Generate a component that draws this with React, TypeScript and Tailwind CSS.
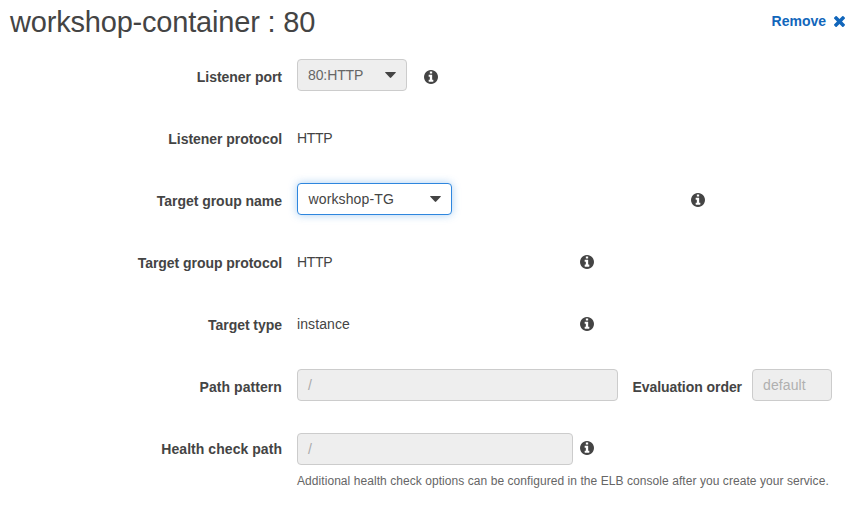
import type { ReactNode } from "react";

function InfoIcon({ className = "" }: { className?: string }) {
  return (
    <svg viewBox="128 128 1536 1536" className={`h-[14px] w-[14px] shrink-0 fill-[#444] ${className}`}>
      <path d="M1152 1376v-160q0-14-9-23t-23-9h-96v-512q0-14-9-23t-23-9h-320q-14 0-23 9t-9 23v160q0 14 9 23t23 9h96v320h-96q-14 0-23 9t-9 23v160q0 14 9 23t23 9h448q14 0 23-9t9-23zm-128-896v-160q0-14-9-23t-23-9h-192q-14 0-23 9t-9 23v160q0 14 9 23t23 9h192q14 0 23-9t9-23zm640 416q0 209-103 385.5t-279.5 279.5-385.5 103-385.5-103-279.5-279.5-103-385.5 103-385.5 279.5-279.5 385.5-103 385.5 103 279.5 279.5 103 385.5z" />
    </svg>
  );
}

function Caret() {
  return (
    <svg viewBox="0 0 11 6" className="mt-[7px] h-[6px] w-[11px] fill-[#444]">
      <path d="M0.6 0h9.8q.8 0 .3.7L6.2 5.6q-.7.7-1.4 0L.3.7Q-.2 0 .6 0z" />
    </svg>
  );
}

function Row({ label, spacing = "", children }: { label: string; spacing?: string; children: ReactNode }) {
  return (
    <div className="flex h-[62px] items-start">
      <div className={`w-[282px] shrink-0 pt-2 text-right font-bold whitespace-nowrap ${spacing}`}>{label}</div>
      <div className="ml-[15px] flex items-start">{children}</div>
    </div>
  );
}

const box = "flex h-8 shrink-0 items-start rounded-[4px] border px-[10px] pt-[5px]";
const disabled = "border-[#ccc] bg-[#eee]";

export default function App() {
  return (
    <main className="h-[531px] w-[860px] overflow-hidden bg-white font-['Liberation_Sans',Arial,sans-serif] text-[14px] leading-5 text-[#444]">
      <header className="flex h-[59px] items-start justify-between pr-[15px] pl-[10px]">
        <h1 className="pt-[4px] text-[29px] leading-9 tracking-[-0.19px]">workshop-container : 80</h1>
        <button className="flex items-center pt-[11px] font-bold text-[#1166bb]">
          Remove
          <svg viewBox="302 302 1188 1188" className="ml-[8px] h-[11px] w-[11px] fill-[#1166bb]">
            <path d="M1490 1258q0 40-28 68l-136 136q-28 28-68 28t-68-28l-294-294-294 294q-28 28-68 28t-68-28l-136-136q-28-28-28-68t28-68l294-294-294-294q-28-28-28-68t28-68l136-136q28-28 68-28t68 28l294 294 294-294q28-28 68-28t68 28l136 136q28 28 28 68t-28 68l-294 294 294 294q28 28 28 68z" />
          </svg>
        </button>
      </header>

      <Row label="Listener port" spacing="tracking-[-0.03px]">
        <div className={`${box} ${disabled} w-[110px] justify-between text-[#666]`}>
          <span className="tracking-[-0.1px]">80:HTTP</span>
          <Caret />
        </div>
        <InfoIcon className="mt-[11px] ml-[17px]" />
      </Row>
      <Row label="Listener protocol" spacing="tracking-[-0.04px]">
        <span className="pt-[7px] tracking-[-0.3px]">HTTP</span>
      </Row>
      <Row label="Target group name" spacing="tracking-[-0.03px]">
        <div className={`${box} w-[155px] justify-between border-[#2e86de] bg-white shadow-[0_0_8px_rgba(46,134,222,0.4)]`}>
          <span className="pl-[0.5px] tracking-[0.13px]">workshop-TG</span>
          <Caret />
        </div>
        <InfoIcon className="mt-[10px] ml-[239px]" />
      </Row>
      <Row label="Target group protocol" spacing="tracking-[-0.04px]">
        <span className="w-[283px] pt-[7px] tracking-[-0.3px]">HTTP</span>
        <InfoIcon className="mt-[10px]" />
      </Row>
      <Row label="Target type" spacing="tracking-[-0.04px]">
        <span className="w-[283px] pt-[7px] tracking-[0.1px]">instance</span>
        <InfoIcon className="mt-[10px]" />
      </Row>
      <Row label="Path pattern" spacing="tracking-[0.07px]">
        <div className={`${box} ${disabled} w-[321px] text-[#aaa]`}>/</div>
        <span className="w-[124px] shrink-0 pt-2 text-right font-bold tracking-[-0.06px] whitespace-nowrap">Evaluation order</span>
        <div className={`${box} ${disabled} ml-[10px] w-20 tracking-[0.1px] text-[#b0b0b0]`}>default</div>
      </Row>
      <Row label="Health check path" spacing="tracking-[0.05px]">
        <div className="pt-[2px]">
          <div className="flex items-start">
            <div className={`${box} ${disabled} w-[276px] text-[#aaa]`}>/</div>
            <InfoIcon className="mt-2 ml-[7px]" />
          </div>
          <p className="pt-[6px] text-[12px] tracking-[0.062px] whitespace-nowrap text-[#666]">
            Additional health check options can be configured in the ELB console after you create your service.
          </p>
        </div>
      </Row>
    </main>
  );
}
